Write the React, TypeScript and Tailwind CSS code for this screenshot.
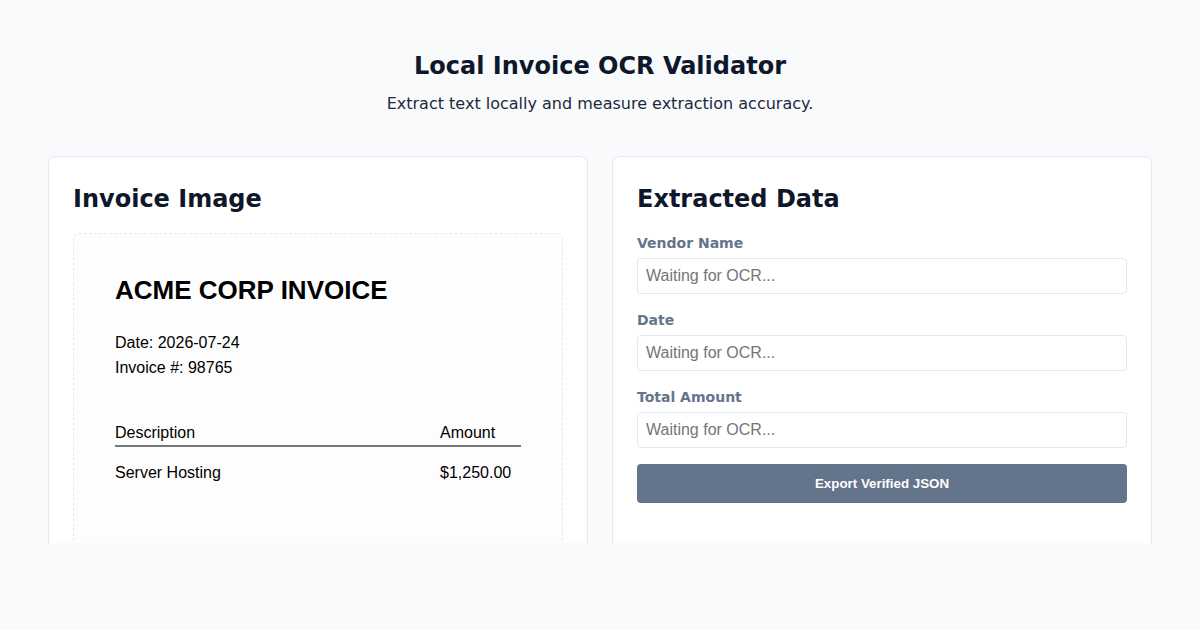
import React from "react";

const fields = ["Vendor Name", "Date", "Total Amount"];

export default function App() {
  return (
    <div className="min-h-[630px] w-full bg-[#f8fafc]" style={{ fontFamily: '"DejaVu Sans", sans-serif' }}>
      <div className="h-[543px] overflow-hidden px-12 pt-[50px]">
        <div className="mb-10 text-center">
          <h1 className="text-2xl font-bold leading-8 text-[#0f172a]">Local Invoice OCR Validator</h1>
          <p className="mt-[10px] text-base leading-6 text-[#1e293b]">
            Extract text locally and measure extraction accuracy.
          </p>
        </div>
        <div className="grid grid-cols-2 gap-6">
          <div className="rounded-lg border border-[#e2e8f0] bg-white p-6">
            <h2 className="mb-[17px] pt-[1px] text-2xl font-bold leading-[34px] text-[#0f172a]">Invoice Image</h2>
            <div className="rounded-md border border-dashed border-[#e2e8f0] bg-[#fdfdfd] px-[41px] pb-24 pt-[41px]">
              <div className="text-black" style={{ fontFamily: '"Liberation Sans", Arial, sans-serif' }}>
                <div className="text-[26px] font-bold leading-[30px]">ACME CORP INVOICE</div>
                <div className="mt-[25px] text-base leading-[25px]">
                  <div>Date: 2026-07-24</div>
                  <div>Invoice #: 98765</div>
                </div>
                <div className="mt-[43px] text-base">
                  <div className="flex border-b-2 border-[#777] pb-[2px] leading-[20px]">
                    <div className="flex-1">Description</div>
                    <div className="w-[81px]">Amount</div>
                  </div>
                  <div className="mt-[16px] flex leading-[20px]">
                    <div className="flex-1">Server Hosting</div>
                    <div className="w-[81px]">$1,250.00</div>
                  </div>
                </div>
              </div>
            </div>
          </div>
          <div className="rounded-lg border border-[#e2e8f0] bg-white p-6 pb-16">
            <h2 className="mb-[17px] pt-[1px] text-2xl font-bold leading-[34px] text-[#0f172a]">Extracted Data</h2>
            <div className="flex flex-col gap-4">
              {fields.map((f) => (
                <div key={f}>
                  <label className="mb-[5px] block text-sm font-bold leading-5 text-[#64748b]">{f}</label>
                  <input
                    readOnly
                    placeholder="Waiting for OCR..."
                    className="block h-9 w-full rounded border border-[#e2e8f0] bg-white px-2 text-base outline-none placeholder:text-[#757575]"
                    style={{ fontFamily: '"Liberation Sans", Arial, sans-serif' }}
                  />
                </div>
              ))}
              <button
                className="h-[39px] w-full rounded bg-[#64748b] text-[13.33px] font-bold text-white"
                style={{ fontFamily: '"Liberation Sans", Arial, sans-serif' }}
              >
                Export Verified JSON
              </button>
            </div>
          </div>
        </div>
      </div>
    </div>
  );
}
